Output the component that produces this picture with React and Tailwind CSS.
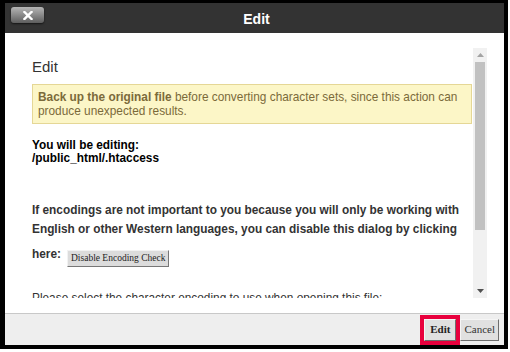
import React from 'react'

function ScrollBar() {
	return (
		<div className="w-[14px] h-full bg-[#f1f1f1] flex flex-col items-center shrink-0">
			<div className="h-[14px] w-full flex items-center justify-center">
				<svg width="7" height="4" viewBox="0 0 7 4"><path d="M3.5 0 L7 4 L0 4 Z" fill="#a3a3a3" /></svg>
			</div>
			<div className="w-[10px] h-[168px] bg-[#c1c1c1]" />
			<div className="flex-1" />
			<div className="h-[14px] w-full flex items-center justify-center">
				<svg width="7" height="4" viewBox="0 0 7 4"><path d="M0 0 L7 0 L3.5 4 Z" fill="#505050" /></svg>
			</div>
		</div>
	)
}

export default function App() {
	return (
		<div className="w-[510px] h-[352px] bg-white" style={{fontFamily: '"Liberation Sans", Arial, sans-serif'}}>
			<div className="w-[508px] h-[349px] bg-black pt-[3px] pl-[5px] pr-[4px] pb-[4px] flex flex-col">
				{/* title bar */}
				<div className="relative h-[30px] bg-[#333333] flex items-center justify-center shrink-0">
					<button
						type="button"
						className="absolute left-[6px] top-[4px] w-[33px] h-[16px] rounded-[3px] bg-gradient-to-b from-[#b5b5b5] via-[#8a8a8a] to-[#5e5e5e] shadow-[0_1px_2px_rgba(0,0,0,0.6)] flex items-center justify-center"
					>
						<svg width="10" height="9" viewBox="0 0 10 9">
							<path d="M1.5 1 L8.5 8 M8.5 1 L1.5 8" stroke="#fff" strokeWidth="2.4" strokeLinecap="square" />
						</svg>
					</button>
					<span className="text-white font-bold text-[14px] ml-[4px] mt-[2px]">Edit</span>
				</div>

				{/* body */}
				<div className="flex-1 bg-white flex flex-col min-h-0">
					<div className="pt-[15px] pl-[13px] pr-[17px] h-[280px] shrink-0">
						<div className="h-[250px] flex">
							<div className="flex-1 overflow-hidden pl-[14px] pr-[1px] text-[#333]">
								<h2 className="text-[15px] leading-[18px] pt-[10px]">Edit</h2>
								<div className="mt-[8px] border border-[#e5d796] bg-[#fcf6c7] text-[#7b6a3a] text-[11.85px] leading-[14px] px-[5px] pt-[5px] pb-[5px]">
									<b>Back up the original file</b> before converting character sets, since this action can produce unexpected results.
								</div>
								<p className="mt-[15px] text-[11.85px] leading-[13px] font-bold text-black">
									You will be editing:<br />/public_html/.htaccess
								</p>
								<p className="mt-[36px] text-[11.85px] leading-[19px] font-bold">
									If encodings are not important to you because you will only be working with English or other Western languages, you can disable this dialog by clicking
								</p>
								<p className="mt-[7px] text-[11.85px] font-bold flex items-start">
									here:
									<button
										type="button"
										className="ml-[6px] mt-[4px] px-[3px] h-[17px] text-[9.5px] bg-[#dcdcdc] border border-t-[#f2f2f2] border-l-[#f2f2f2] border-r-[#777] border-b-[#777] font-normal text-[#222]"
										style={{fontFamily: '"Liberation Serif", "Times New Roman", serif'}}
									>
										Disable Encoding Check
									</button>
								</p>
								<p className="mt-[23px] text-[11.85px]">Please select the character encoding to use when opening this file:</p>
								<select className="mt-[8px] text-[12px] border border-[#aaa] px-[4px] py-[2px]">
									<option>utf-8</option>
								</select>
							</div>
							<ScrollBar />
						</div>
					</div>
					{/* footer */}
					<div className="flex-1 bg-[#eeeeee] border-t border-[#c8c8c8] flex items-center justify-end pr-[5px]">
						<div className="border-[4px] border-[#e8003d] flex">
							<button
								type="button"
								className="h-[22px] px-[5px] text-[11px] font-bold bg-[#e0e0e0] border border-t-[#f5f5f5] border-l-[#f5f5f5] border-r-[#6e6e6e] border-b-[#6e6e6e] text-[#222]"
								style={{fontFamily: '"Liberation Serif", "Times New Roman", serif'}}
							>
								Edit
							</button>
						</div>
						<button
							type="button"
							className="h-[22px] px-[3px] text-[11px] bg-[#e0e0e0] border border-t-[#f5f5f5] border-l-[#f5f5f5] border-r-[#6e6e6e] border-b-[#6e6e6e] text-[#333]"
							style={{fontFamily: '"Liberation Serif", "Times New Roman", serif'}}
						>
							Cancel
						</button>
					</div>
				</div>
			</div>
		</div>
	)
}
